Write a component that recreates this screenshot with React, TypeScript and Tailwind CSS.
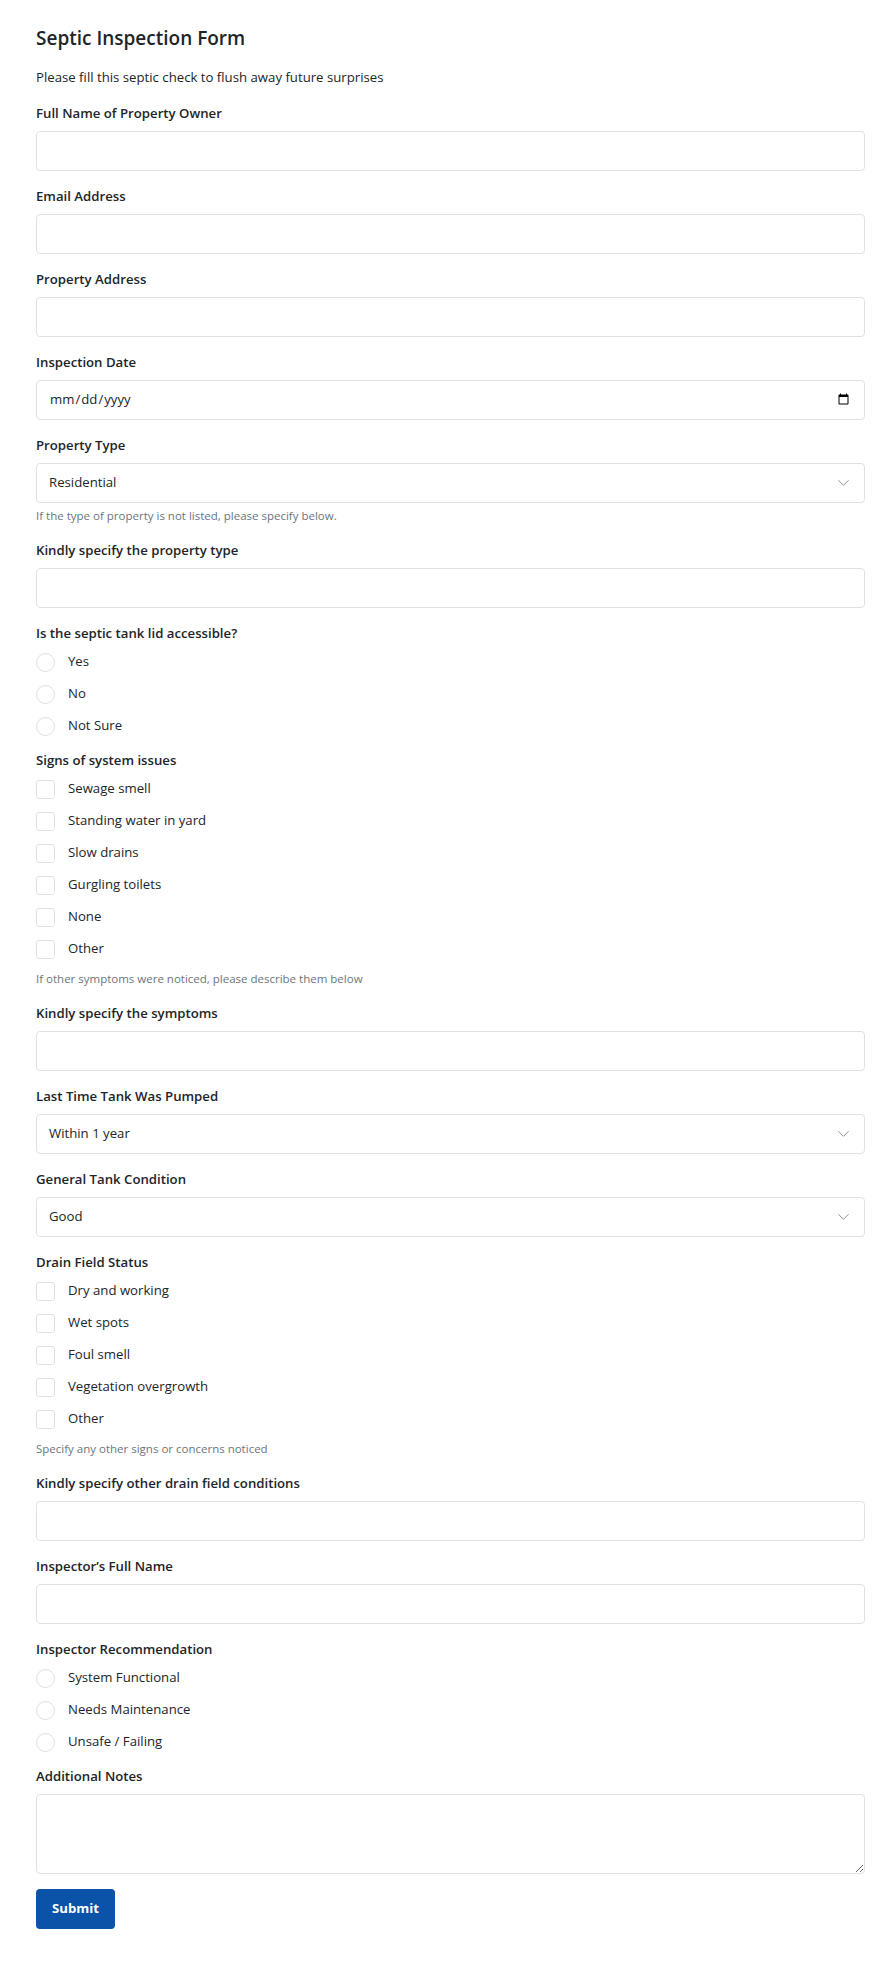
import { useState } from "react";

type ChoiceProps = {
    title: string;
    name: string;
    options: string[];
    kind: "radio" | "checkbox";
    help?: string;
};

const Label = ({ children, className = "mb-2" }: { children: React.ReactNode; className?: string }) => (
    <label className={`block text-[13.2px] leading-5 font-semibold text-[#212529] ${className}`}>{children}</label>
);

const Help = ({ children, className = "" }: { children: React.ReactNode; className?: string }) => (
    <p className={`text-[11.5px] leading-[18px] text-[#6c757d] ${className}`}>{children}</p>
);

const TextField = ({ label, type = "text" }: { label: string; type?: string }) => (
    <div className="mb-[15px]">
        <Label>{label}</Label>
        <input
            type={type}
            className="block w-full h-10 px-3 rounded border border-[#dee2e6] bg-white text-[13.2px] text-[#212529] outline-none"
        />
    </div>
);

const SelectField = ({ label, options, help }: { label: string; options: string[]; help?: string }) => {
    const [value, setValue] = useState(options[0]);
    return (
        <div className="mb-[15px]">
            <Label>{label}</Label>
            <div className="relative">
                <select
                    value={value}
                    onChange={(e) => setValue(e.target.value)}
                    className="block w-full h-10 pl-3 pr-8 rounded border border-[#dee2e6] bg-white text-[13.2px] text-[#212529] appearance-none outline-none"
                >
                    {options.map((o) => (
                        <option key={o} value={o}>{o}</option>
                    ))}
                </select>
                <svg
                    className="absolute right-[16px] top-1/2 -translate-y-1/2 pointer-events-none"
                    width="11"
                    height="7"
                    viewBox="0 0 11 7"
                    fill="none"
                >
                    <path d="M0.5 0.8L5.5 5.8L10.5 0.8" stroke="#8a8f94" strokeWidth="1" />
                </svg>
            </div>
            {help && <Help className="mt-1">{help}</Help>}
        </div>
    );
};

const ChoiceGroup = ({ title, name, options, kind, help }: ChoiceProps) => (
    <div className={help ? "mb-[15px]" : "mb-[14px]"}>
        <Label className="mb-[9px]">{title}</Label>
        <div className="flex flex-col gap-3">
            {options.map((o) => (
                <label key={o} className="flex items-center gap-[13px] h-5 text-[13.2px] text-[#212529]">
                    <input
                        type={kind}
                        name={name}
                        className={`appearance-none w-[19px] h-[19px] border border-[#dee2e6] bg-white shrink-0 ${
                            kind === "radio" ? "rounded-full" : "rounded-[3px]"
                        }`}
                    />
                    {o}
                </label>
            ))}
        </div>
        {help && <Help className="mt-[11px]">{help}</Help>}
    </div>
);

export default function App() {
    return (
        <div
            className="bg-white min-h-[1966px] pl-[36px] pr-[23px] pt-6 pb-[37px] text-[#212529]"
            style={{ fontFamily: '"Open Sans", "Noto Sans", sans-serif' }}
        >
            <h1 className="text-[19px] leading-7 font-semibold text-[#212529]">Septic Inspection Form</h1>
            <p className="mt-[15px] mb-4 text-[13.2px] leading-5">Please fill this septic check to flush away future surprises</p>

            <form onSubmit={(e) => e.preventDefault()}>
                <TextField label="Full Name of Property Owner" />
                <TextField label="Email Address" type="email" />
                <TextField label="Property Address" />
                <TextField label="Inspection Date" type="date" />
                <SelectField
                    label="Property Type"
                    options={["Residential", "Commercial", "Agricultural"]}
                    help="If the type of property is not listed, please specify below."
                />
                <TextField label="Kindly specify the property type" />
                <ChoiceGroup
                    title="Is the septic tank lid accessible?"
                    name="lid"
                    kind="radio"
                    options={["Yes", "No", "Not Sure"]}
                />
                <ChoiceGroup
                    title="Signs of system issues"
                    name="issues"
                    kind="checkbox"
                    options={["Sewage smell", "Standing water in yard", "Slow drains", "Gurgling toilets", "None", "Other"]}
                    help="If other symptoms were noticed, please describe them below"
                />
                <TextField label="Kindly specify the symptoms" />
                <SelectField
                    label="Last Time Tank Was Pumped"
                    options={["Within 1 year", "1-3 years ago", "More than 3 years ago", "Never / Unknown"]}
                />
                <SelectField label="General Tank Condition" options={["Good", "Fair", "Poor"]} />
                <ChoiceGroup
                    title="Drain Field Status"
                    name="drain"
                    kind="checkbox"
                    options={["Dry and working", "Wet spots", "Foul smell", "Vegetation overgrowth", "Other"]}
                    help="Specify any other signs or concerns noticed"
                />
                <TextField label="Kindly specify other drain field conditions" />
                <TextField label="Inspector’s Full Name" />
                <ChoiceGroup
                    title="Inspector Recommendation"
                    name="recommendation"
                    kind="radio"
                    options={["System Functional", "Needs Maintenance", "Unsafe / Failing"]}
                />
                <div className="mb-[15px]">
                    <Label>Additional Notes</Label>
                    <textarea className="block w-full h-20 px-3 py-2 rounded border border-[#dee2e6] bg-white text-[13.2px] outline-none" />
                </div>
                <button
                    type="submit"
                    className="h-10 w-[79px] rounded bg-[#0a53a8] text-white text-[13.2px] font-bold"
                >
                    Submit
                </button>
            </form>
        </div>
    );
}
